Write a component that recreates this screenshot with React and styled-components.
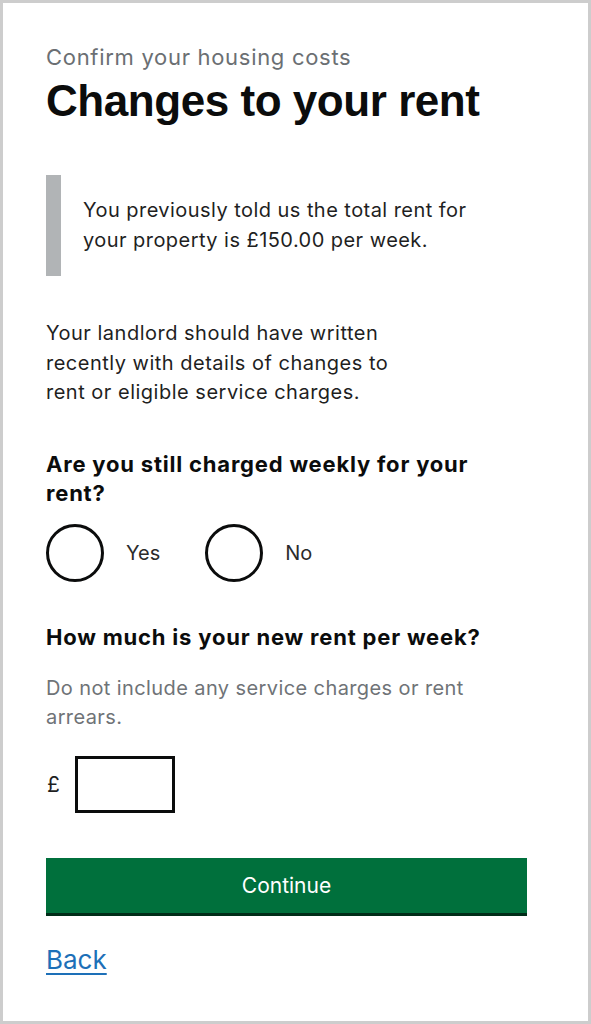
import styled, { createGlobalStyle } from 'styled-components'

const GlobalStyle = createGlobalStyle`
    html, body {
        margin: 0;
        padding: 0;
        background: #ffffff;
    }
    body {
        font-family: Inter, "Liberation Sans", Arial, sans-serif;
        color: #0b0c0c;
    }
`

// Phone frame around the page
const Frame = styled.div`
    width: 591px;
    height: 1024px;
    box-sizing: border-box;
    border: 3px solid #cdcdcd;
    background: #ffffff;
    padding: 39px 61px 0 43px;
    display: flex;
    flex-direction: column;
`

const Caption = styled.span`
    display: block;
    font-size: 22px;
    line-height: 30px;
    color: #6b6f73;
    letter-spacing: 0.7px;
`

const Heading = styled.h1`
    margin: 5px 0 0;
    font-family: "Liberation Sans", Arial, sans-serif;
    font-size: 44px;
    line-height: 48px;
    font-weight: 700;
    letter-spacing: -0.45px;
`

const Inset = styled.div`
    margin-top: 50px;
    border-left: 15px solid #b1b4b6;
    padding: 20px 0 21px 22px;
    font-size: 20px;
    line-height: 30px;
    color: #1f1f1f;
    letter-spacing: 0.45px;
`

const Body = styled.p`
    margin: 43px 0 0;
    font-size: 20px;
    line-height: 29.5px;
    color: #1f1f1f;
    letter-spacing: 0.5px;
`

const Question = styled.h2`
    margin: ${(props) => props.$top || 0}px 0 0;
    font-size: 22px;
    line-height: 29px;
    font-weight: 700;
    letter-spacing: 0.8px;
`

const RadioRow = styled.div`
    margin-top: 16px;
    display: flex;
    align-items: center;
    gap: 45px;
`

const RadioItem = styled.label`
    display: flex;
    align-items: center;
    gap: 22px;
    font-size: 20px;
    color: #2b2b2b;
`

const Circle = styled.span`
    width: 58px;
    height: 58px;
    box-sizing: border-box;
    border: 3px solid #0b0c0c;
    border-radius: 50%;
`

const Hint = styled.p`
    margin: 22px 0 0;
    font-size: 20px;
    line-height: 29px;
    color: #6f7377;
    letter-spacing: 0.4px;
`

const AmountRow = styled.div`
    margin-top: 24px;
    display: flex;
    align-items: center;
    gap: 15px;
    font-size: 21px;
`

const Pound = styled.span`
    padding-left: 1px;
    color: #1f1f1f;
`

const AmountInput = styled.input`
    width: 100px;
    height: 57px;
    box-sizing: border-box;
    border: 3px solid #0b0c0c;
    border-radius: 0;
    padding: 0 8px;
    font-size: 20px;
    font-family: inherit;
`

const ContinueButton = styled.button`
    margin-top: 45px;
    width: 481px;
    height: 58px;
    box-sizing: border-box;
    border: 0;
    border-bottom: 3px solid #002d18;
    background: #00703c;
    color: #ffffff;
    font-family: inherit;
    font-size: 21px;
    cursor: pointer;
`

const BackLink = styled.a`
    margin-top: 26px;
    align-self: flex-start;
    font-size: 26px;
    line-height: 36px;
    color: #1d70b8;
    text-decoration: underline;
    text-decoration-thickness: 2px;
    text-underline-offset: 4px;
`

function App() {
    return (
        <>
            <GlobalStyle />
            <Frame>
                <Caption>Confirm your housing costs</Caption>
                <Heading>Changes to your rent</Heading>

                {/* Previously given rent */}
                <Inset>
                    You previously told us the total rent for
                    <br />
                    your property is £150.00 per week.
                </Inset>

                <Body>
                    Your landlord should have written
                    <br />
                    recently with details of changes to
                    <br />
                    rent or eligible service charges.
                </Body>

                <Question $top={42}>
                    Are you still charged weekly for your
                    <br />
                    rent?
                </Question>
                <RadioRow>
                    <RadioItem>
                        <Circle />
                        Yes
                    </RadioItem>
                    <RadioItem>
                        <Circle />
                        No
                    </RadioItem>
                </RadioRow>

                <Question $top={41}>How much is your new rent per week?</Question>
                <Hint>
                    Do not include any service charges or rent
                    <br />
                    arrears.
                </Hint>
                <AmountRow>
                    <Pound>£</Pound>
                    <AmountInput type="text" />
                </AmountRow>

                <ContinueButton>Continue</ContinueButton>
                <BackLink href="#">Back</BackLink>
            </Frame>
        </>
    )
}

export default App
